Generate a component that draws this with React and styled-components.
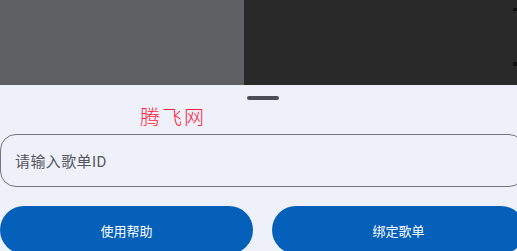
import React from 'react';
import styled, { createGlobalStyle } from 'styled-components';

const GlobalStyle = createGlobalStyle`
    html, body {
        margin: 0;
        padding: 0;
        overflow: hidden;
        background: #eef1fa;
        font-family: Roboto, "Noto Sans CJK SC", sans-serif;
    }
`;

const Screen = styled.div`
    width: 517px;
    height: 251px;
    overflow: hidden;
`;

const Backdrop = styled.div`
    display: flex;
    height: 85px;
`;

const Panel = styled.div`
    width: ${(p) => p.width || 'auto'};
    flex: ${(p) => (p.width ? 'none' : 1)};
    background: ${(p) => p.bg};
    display: flex;
    flex-direction: column;
    align-items: flex-end;
    padding-top: 8px;
    gap: 51px;
    box-sizing: border-box;
`;

const Tick = styled.div`
    width: 4px;
    height: ${(p) => p.h}px;
    background: #111;
`;

const Sheet = styled.div`
    width: 525px;
    background: #eef1fa;
    border-radius: 3px 3px 0 0;
    display: flex;
    flex-direction: column;
    padding-top: 11px;
`;

const Handle = styled.div`
    align-self: center;
    width: 32px;
    height: 4px;
    border-radius: 2px;
    background: #4a4d55;
`;

const Title = styled.div`
    margin-top: 3px;
    padding-left: 140px;
    font-family: "Noto Sans CJK SC", sans-serif;
    font-weight: 300;
    font-size: 20px;
    line-height: 28px;
    color: #ff1f3d;
    letter-spacing: 2px;
`;

const Field = styled.div`
    margin-top: 3px;
    height: 53px;
    box-sizing: border-box;
    border: 1px solid #76777d;
    border-radius: 16px;
    display: flex;
    align-items: center;
    padding-left: 14px;
    font-family: Roboto, "Noto Sans CJK SC", sans-serif;
    font-size: 15px;
    letter-spacing: 0.4px;
    color: #55565c;
`;

const Actions = styled.div`
    margin-top: 19px;
    display: grid;
    grid-template-columns: 1fr 1fr;
    gap: 19px;
`;

const Button = styled.button`
    height: 48px;
    border: none;
    border-radius: 24px;
    background: #0560b9;
    color: #ffffff;
    font-family: Roboto, "Noto Sans CJK SC", sans-serif;
    font-size: 13px;
    padding: 0;
`;

const App = () => {
    return (
        <Screen>
            <GlobalStyle />
            <Backdrop>
                <Panel width="244px" bg="#5f6064" />
                <Panel bg="#292929">
                    <Tick h={3} />
                    <Tick h={4} />
                </Panel>
            </Backdrop>
            <Sheet>
                <Handle />
                <Title>腾飞网</Title>
                <Field>请输入歌单ID</Field>
                <Actions>
                    <Button>使用帮助</Button>
                    <Button>绑定歌单</Button>
                </Actions>
            </Sheet>
        </Screen>
    );
};

export default App;
